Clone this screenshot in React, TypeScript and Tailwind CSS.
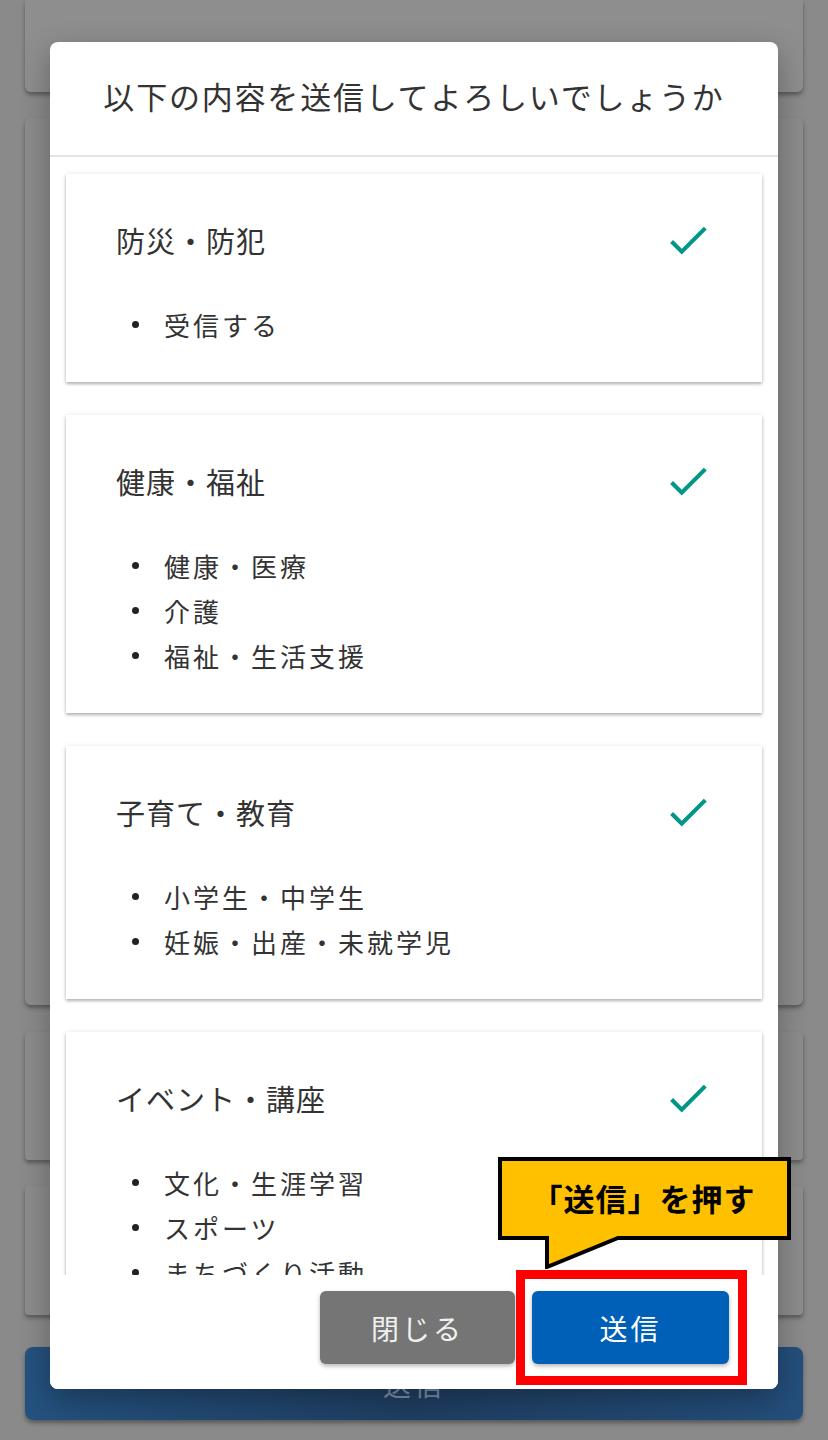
import React from "react";

const sections: { title: string; items: string[] }[] = [
  { title: "防災・防犯", items: ["受信する"] },
  { title: "健康・福祉", items: ["健康・医療", "介護", "福祉・生活支援"] },
  { title: "子育て・教育", items: ["小学生・中学生", "妊娠・出産・未就学児"] },
  { title: "イベント・講座", items: ["文化・生涯学習", "スポーツ", "まちづくり活動"] },
];

function Check() {
  return (
    <svg width="50" height="50" viewBox="0 0 24 24" className="shrink-0">
      <path d="M9 16.17L4.83 12l-1.42 1.41L9 19 21 7l-1.41-1.41z" fill="#009688" />
    </svg>
  );
}

function Section({ title, items }: { title: string; items: string[] }) {
  return (
    <div className="shrink-0 bg-white shadow-[0_2px_3px_rgba(0,0,0,0.28),0_0_6px_rgba(0,0,0,0.08)] pl-[50px] pr-[49px] pt-[41px] pb-[35px]">
      <div className="flex items-center justify-between h-[50px]">
        <span className="text-[29px] leading-[34px] text-[#333] tracking-[1px]">{title}</span>
        <Check />
      </div>
      <ul className="mt-[37px] flex flex-col">
        {items.map((it) => (
          <li key={it} className="flex items-center h-[45px]">
            <span className="w-[7px] h-[7px] rounded-full bg-[#222] ml-[16px] mr-[25px]" />
            <span className="text-[26px] leading-[45px] text-[#333] tracking-[3px]">{it}</span>
          </li>
        ))}
      </ul>
    </div>
  );
}

export default function App() {
  return (
    <div
      className="relative w-[828px] h-[1440px] overflow-hidden bg-[#8a8a8a]"
      style={{ fontFamily: '"Noto Sans CJK JP", "Noto Sans", sans-serif' }}
    >
      {/* background page (dimmed) */}
      <div className="flex flex-col px-[25px]">
        <div className="h-[92px] bg-[#8e8e8e] rounded-b-[6px] shadow-[0_3px_4px_rgba(0,0,0,0.35)]" />
        <div className="mt-[26px] h-[887px] bg-[#8c8c8c] rounded-[6px] shadow-[0_3px_4px_rgba(0,0,0,0.35)]" />
        <div className="mt-[27px] h-[128px] bg-[#8c8c8c] rounded-[4px] shadow-[0_3px_4px_rgba(0,0,0,0.35)]" />
        <div className="mt-[26px] h-[129px] bg-[#8c8c8c] rounded-[4px] shadow-[0_3px_4px_rgba(0,0,0,0.35)]" />
        <div className="mt-[32px] h-[73px] rounded-[8px] bg-gradient-to-r from-[#24527f] via-[#1f3e62] to-[#244f7c] flex items-center justify-center shadow-[0_3px_4px_rgba(0,0,0,0.35)]">
          <span className="text-[28px] text-[#7d8fa6] tracking-[3px]">送信</span>
        </div>
      </div>

      {/* modal */}
      <div className="absolute left-[50px] top-[42px] w-[728px] h-[1347px] bg-white rounded-[8px] flex flex-col overflow-hidden shadow-[0_10px_30px_rgba(0,0,0,0.3)]">
        <div className="h-[115px] shrink-0 flex items-center justify-center border-b-2 border-[#e4e4e4]">
          <span className="text-[31px] text-[#333] tracking-[1.8px] mt-[-4px]">以下の内容を送信してよろしいでしょうか</span>
        </div>
        <div className="flex-1 overflow-hidden px-[16px] pt-[17px] flex flex-col gap-[33px]">
          {sections.map((s) => (
            <Section key={s.title} title={s.title} items={s.items} />
          ))}
        </div>
        <div className="h-[114px] shrink-0 flex justify-end items-start pt-[16px] pr-[49px] gap-[17px] bg-white">
          <button className="w-[195px] h-[73px] rounded-[6px] bg-[#757575] text-[#f0f0f0] text-[28px] tracking-[3px] shadow-[0_2px_4px_rgba(0,0,0,0.3)]">
            閉じる
          </button>
          <button className="w-[197px] h-[73px] rounded-[6px] bg-[#0060b8] text-white text-[28px] tracking-[3px] shadow-[0_2px_4px_rgba(0,0,0,0.3)]">
            送信
          </button>
        </div>
      </div>

      {/* red highlight */}
      <div className="absolute left-[516px] top-[1270px] w-[231px] h-[115px] border-[9px] border-[#ff0000]" />

      {/* callout */}
      <div className="absolute left-[498px] top-[1157px] w-[293px] h-[112px]">
        <svg width="293" height="112" viewBox="0 0 293 112" className="absolute left-0 top-0">
          <path
            d="M2 2 H291 V81 H120 L49 110 V81 H2 Z"
            fill="#ffc000"
            stroke="#000"
            strokeWidth="4"
            strokeLinejoin="miter"
          />
        </svg>
        <div className="absolute left-0 top-0 w-[293px] h-[81px] flex items-center justify-center">
          <span className="text-[31px] font-bold text-black leading-none tracking-[1px] ml-[-2px]">「送信」を押す</span>
        </div>
      </div>
    </div>
  );
}
